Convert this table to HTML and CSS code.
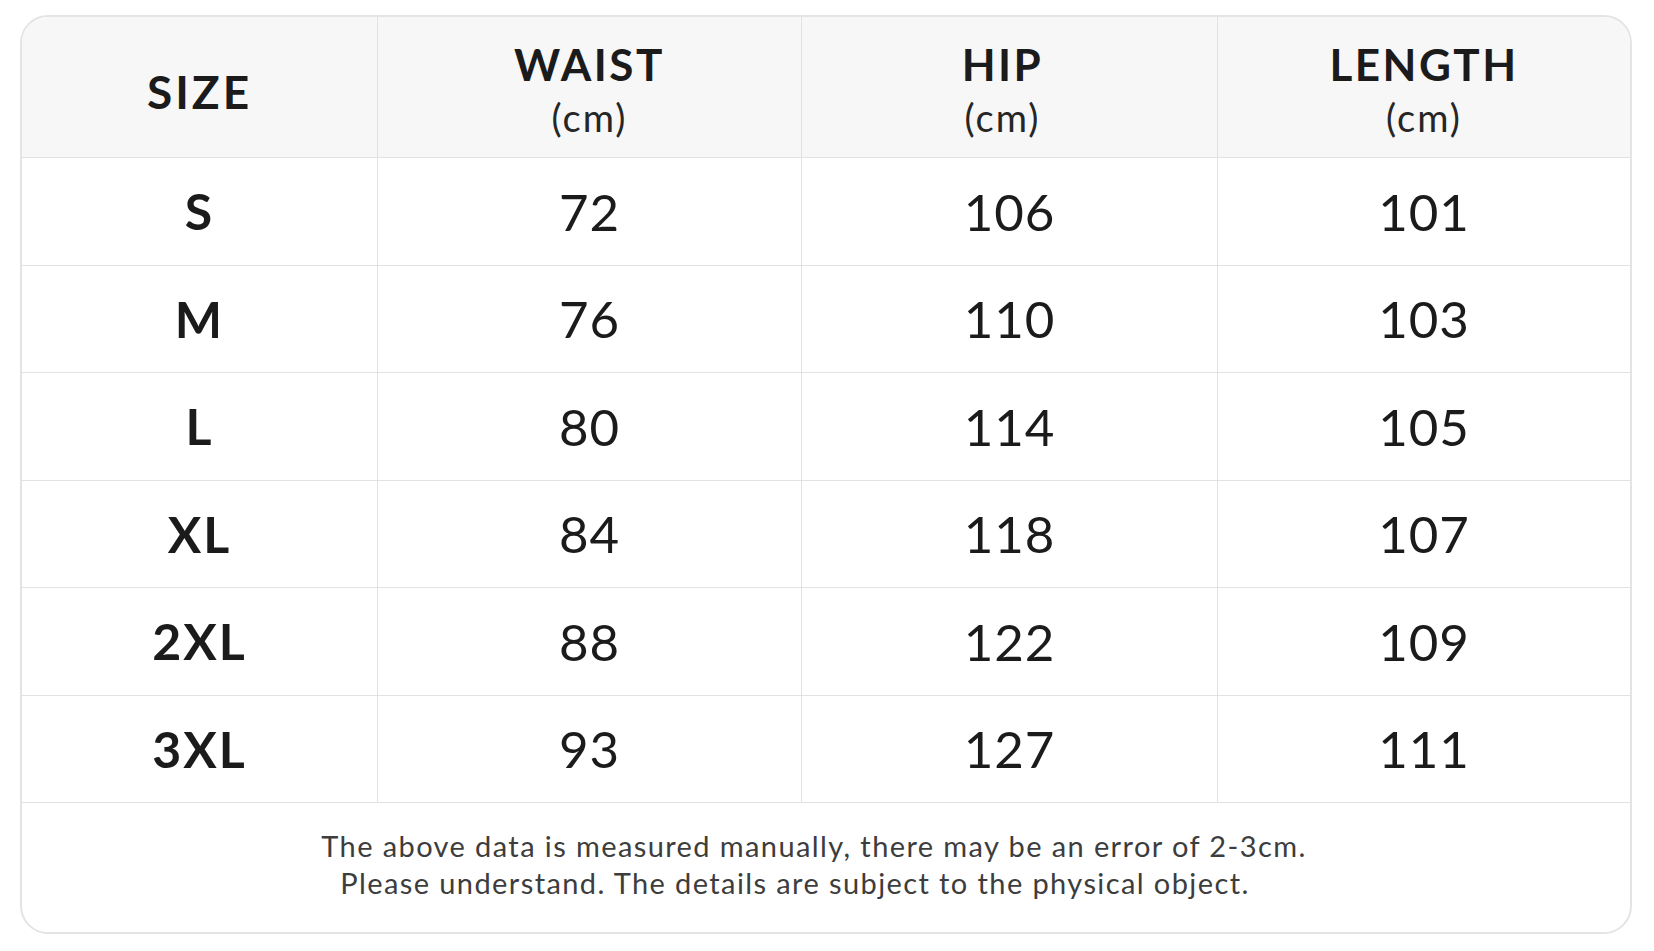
FILE: index.html
```html
<!DOCTYPE html>
<html lang="en">
<head>
<meta charset="utf-8">
<title>Size Chart</title>
<link rel="stylesheet" href="styles.css">
</head>
<body>
<div class="card">
  <div class="grid">
    <div class="cell head"><span class="h-size">SIZE</span></div>
    <div class="cell head"><span class="h-title">WAIST</span><span class="h-unit">(cm)</span></div>
    <div class="cell head"><span class="h-title hip">HIP</span><span class="h-unit hip">(cm)</span></div>
    <div class="cell head last"><span class="h-title">LENGTH</span><span class="h-unit">(cm)</span></div>

    <div class="cell label">S</div><div class="cell num">72</div><div class="cell num">106</div><div class="cell num last">101</div>
    <div class="cell label">M</div><div class="cell num">76</div><div class="cell num">110</div><div class="cell num last">103</div>
    <div class="cell label">L</div><div class="cell num">80</div><div class="cell num">114</div><div class="cell num last">105</div>
    <div class="cell label">XL</div><div class="cell num">84</div><div class="cell num">118</div><div class="cell num last">107</div>
    <div class="cell label">2XL</div><div class="cell num">88</div><div class="cell num">122</div><div class="cell num last">109</div>
    <div class="cell label">3XL</div><div class="cell num">93</div><div class="cell num">127</div><div class="cell num last">111</div>
  </div>
  <div class="note">
    <p class="line1">The above data is measured manually, there may be an error of 2-3cm.</p>
    <p class="line2">Please understand. The details are subject to the physical object.</p>
  </div>
</div>
</body>
</html>
```
FILE: styles.css
```css
html, body {
  margin: 0;
  padding: 0;
  background: #ffffff;
}
body {
  padding: 15px 22px 0 20px;
  font-family: "Lato", "Open Sans", sans-serif;
  color: #1a1a1a;
}
.card {
  box-sizing: border-box;
  width: 1612px;
  height: 919px;
  border: 2px solid #e4e4e4;
  border-radius: 28px;
  overflow: hidden;
  display: flex;
  flex-direction: column;
  background: #ffffff;
}
.grid {
  display: grid;
  grid-template-columns: 356px 424px 416px 1fr;
  grid-template-rows: 141px repeat(6, 107.5px);
}
.cell {
  box-sizing: border-box;
  border-right: 1.5px solid #e2e2e2;
  border-bottom: 1.5px solid #e2e2e2;
  display: flex;
  flex-direction: column;
  align-items: center;
  justify-content: center;
}
.cell.last {
  border-right: none;
}
.head {
  background: #f7f7f7;
  padding-top: 4px;
}
.h-size {
  font-weight: 700;
  font-size: 46px;
  letter-spacing: 3px;
  line-height: 1;
  margin-top: 6px;
  color: #1b1b1b;
}
.h-title {
  font-weight: 700;
  font-size: 44px;
  letter-spacing: 2.5px;
  line-height: 1;
  color: #1b1b1b;
}
.h-unit {
  font-weight: 400;
  font-size: 38px;
  letter-spacing: 2px;
  line-height: 1;
  margin-top: 12px;
  color: #262626;
}
.hip {
  margin-right: 14px;
}
.label {
  font-weight: 700;
  font-size: 50px;
  letter-spacing: 2px;
  color: #1b1b1b;
}
.num {
  font-weight: 400;
  font-size: 51px;
  letter-spacing: 1px;
  color: #1b1b1b;
}
.note {
  flex: 1;
  display: flex;
  flex-direction: column;
  align-items: center;
  justify-content: center;
  padding-bottom: 8px;
  padding-right: 24px;
}
.note p {
  margin: 0;
  font-size: 29px;
  line-height: 37px;
  letter-spacing: 1.4px;
  color: #3d3d3d;
}
.note .line2 {
  padding-right: 38px;
}
```
